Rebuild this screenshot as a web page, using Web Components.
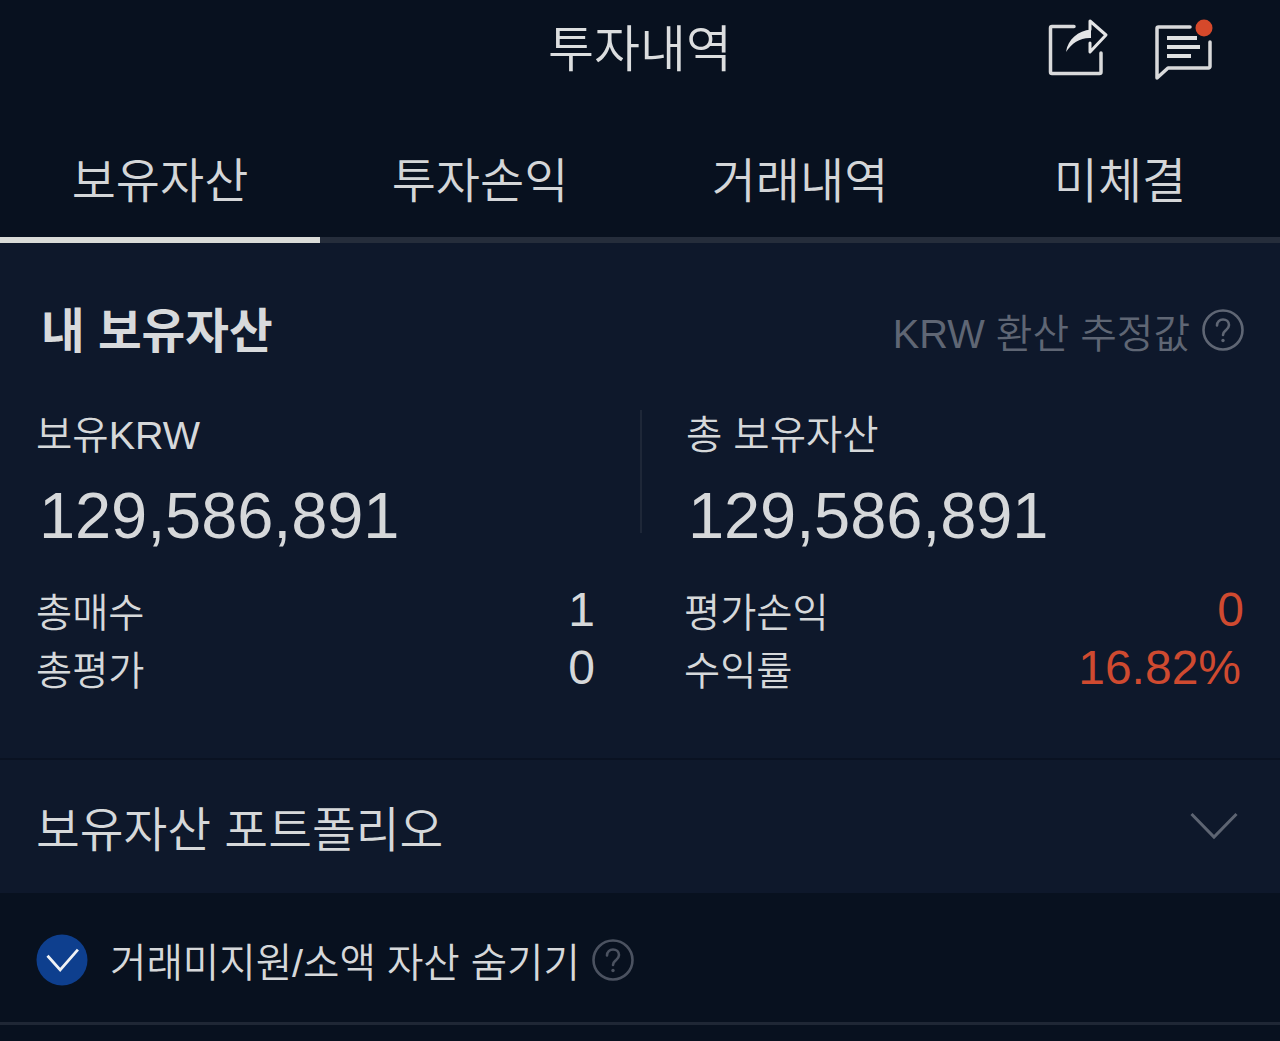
<!DOCTYPE html>
<html lang="ko">
<head>
<meta charset="utf-8">
<title>투자내역</title>
<style>
html, body { margin: 0; padding: 0; background: #08111f; }
body {
  width: 1280px;
  height: 1041px;
  overflow: hidden;
  font-family: "Liberation Sans", "Noto Sans CJK KR", sans-serif;
  font-weight: 350;
  color: #d6d8da;
}
</style>
</head>
<body>
<invest-page></invest-page>

<script>
// help icon, shared by the card head and the bottom option row
const helpIcon = (size, color) => `
<svg width="${size}" height="${size}" viewBox="0 0 42 42" fill="none" stroke="${color}">
  <circle cx="21" cy="21" r="19.500" stroke-width="2.600"/>
  <path d="M15 16.500c0-3.700 2.700-6 6-6s6 2.200 6 5.600c0 2.800-1.800 4-3.500 5.400-1.500 1.200-2.500 2.400-2.500 4.500" stroke-width="2.600" stroke-linecap="round"/>
  <circle cx="21" cy="31.500" r="1.700" fill="${color}" stroke="none"/>
</svg>`;

class TopBar extends HTMLElement {
  constructor() {
    super();
    this.attachShadow({ mode: 'open' });
    this.shadowRoot.innerHTML = `
<style>
:host { display: grid; grid-template-columns: 1fr auto 1fr; align-items: start; height: 118px; }
h1 { grid-column: 2; margin: 0; font-size: 50px; font-weight: 350; line-height: 100px; color: #dcdedf; }
.icons { grid-column: 3; display: flex; justify-content: flex-end; gap: 43px; padding: 18px 66px 0 0; }
svg { display: block; }
</style>
<h1>투자내역</h1>
<div class="icons">
  <svg width="62" height="62" viewBox="0 0 62 62" fill="none">
    <path d="M27 8.500H5a1.500 1.500 0 0 0-1.500 1.500V54a1.500 1.500 0 0 0 1.500 1.500H52.500a1.500 1.500 0 0 0 1.500-1.500V35" stroke="#d9dadb" stroke-width="3.500" stroke-linecap="round" stroke-linejoin="round"/>
    <path d="M43 11.500V3L59 17 43 34V25" stroke="#e4e5e6" stroke-width="3" stroke-linejoin="round" stroke-linecap="round"/>
    <path d="M19 34C21 21 31 13 44 11.500V20C33 19.500 25 25 19 34Z" fill="#e4e5e6"/>
  </svg>
  <svg width="62" height="62" viewBox="0 0 62 62" fill="none">
    <path d="M38 9H6.500a1.500 1.500 0 0 0-1.500 1.500V60L16 50H56.500a1.500 1.500 0 0 0 1.500-1.500V24" stroke="#d9dadb" stroke-width="3.500" stroke-linecap="round" stroke-linejoin="round"/>
    <path d="M15 20H45M15 29H48M15 38H39" stroke="#e0e1e2" stroke-width="4.200"/>
    <circle cx="52" cy="10" r="8.500" fill="#d6492b"/>
  </svg>
</div>`;
  }
}

class TabBar extends HTMLElement {
  constructor() {
    super();
    this.attachShadow({ mode: 'open' });
    this.shadowRoot.innerHTML = `
<style>
:host { display: grid; grid-template-columns: repeat(4, 1fr); }
::slotted(*) { display: block; }
</style>
<slot></slot>`;
  }
}

class TabItem extends HTMLElement {
  constructor() {
    super();
    this.attachShadow({ mode: 'open' });
    this.shadowRoot.innerHTML = `
<style>
:host { display: block; height: 125px; box-sizing: border-box; padding-top: 6px; text-align: center; font-size: 48px; line-height: 116px; color: #d4d6d8; border-bottom: 6px solid #252d3b; }
:host([active]) { border-bottom-color: #d9dbd8; }
</style>
<slot></slot>`;
  }
}

class AssetCard extends HTMLElement {
  constructor() {
    super();
    this.attachShadow({ mode: 'open' });
    this.shadowRoot.innerHTML = `
<style>
:host { display: block; background: #0e182b; height: 515px; box-sizing: border-box; padding: 50px 36px 0 36px; }
.head { display: flex; justify-content: space-between; align-items: center; height: 74px; }
h2 { margin: -6px 0 0 5px; font-size: 47.500px; font-weight: 700; color: #d8dadc; }
.note { display: flex; align-items: center; gap: 12px; font-size: 39.800px; color: #5f6674; }
.note svg { display: block; }
.cols { display: grid; grid-template-columns: 606px 1fr; margin-top: 43px; }
</style>
<div class="head">
  <h2>내 보유자산</h2>
  <div class="note"><span>KRW 환산 추정값</span>${helpIcon(42, '#5f6674')}</div>
</div>
<div class="cols"><slot></slot></div>`;
  }
}

class AssetColumn extends HTMLElement {
  constructor() {
    super();
    this.attachShadow({ mode: 'open' });
    this.shadowRoot.innerHTML = `
<style>
:host { display: block; }
.top { height: 123px; margin-bottom: 47px; box-sizing: border-box; }
:host([divided]) .top { border-right: 2px solid #1e2738; }
.label { font-size: 39.500px; line-height: 50px; height: 50px; padding-left: var(--label-pad, 0); color: #d6d8da; }
.total { font-size: 65px; line-height: 72px; margin-top: 20px; padding-left: var(--total-pad, 3px); color: #d6d8da; letter-spacing: -0.1px; }
</style>
<div class="top">
  <div class="label"><slot name="label"></slot></div>
  <div class="total"><slot name="total"></slot></div>
</div>
<slot></slot>`;
  }
}

class StatRow extends HTMLElement {
  constructor() {
    super();
    this.attachShadow({ mode: 'open' });
    this.shadowRoot.innerHTML = `
<style>
:host { display: flex; justify-content: space-between; align-items: center; height: 58px; font-size: 39.300px; color: #d6d8da; }
.v { font-size: 48px; }
:host([red]) .v { color: #cf4a30; }
</style>
<span><slot name="name"></slot></span>
<span class="v"><slot></slot></span>`;
  }
}

class PortfolioRow extends HTMLElement {
  constructor() {
    super();
    this.attachShadow({ mode: 'open' });
    this.shadowRoot.innerHTML = `
<style>
:host { display: flex; justify-content: space-between; align-items: center; box-sizing: border-box; height: 135px; padding: 0 42px 0 36px; background: #0e182b; border-top: 2px solid #0a1222; font-size: 47.600px; color: #d6d8da; }
svg { display: block; }
</style>
<span><slot></slot></span>
<svg width="48" height="30" viewBox="0 0 48 30" fill="none"><path d="M1.500 2L24 25 46.500 2" stroke="#5d6472" stroke-width="3"/></svg>`;
  }
}

class OptionRow extends HTMLElement {
  constructor() {
    super();
    this.attachShadow({ mode: 'open' });
    this.shadowRoot.innerHTML = `
<style>
:host { display: flex; align-items: center; box-sizing: border-box; height: 132px; padding: 4px 0 0 36px; border-bottom: 3px solid #1f2735; font-size: 39.600px; color: #d6d8da; }
.check { display: block; margin-right: 22px; }
.help { display: flex; margin-left: 12px; }
</style>
<svg class="check" width="52" height="52" viewBox="0 0 52 52"><circle cx="26" cy="26" r="25.500" fill="#0e3f8e"/><path d="M11.500 21.700L24.200 36 41.900 15.700" fill="none" stroke="#f0f2f5" stroke-width="2.800"/></svg>
<span><slot></slot></span>
<span class="help">${helpIcon(42, '#4b5260')}</span>`;
  }
}

class InvestPage extends HTMLElement {
  constructor() {
    super();
    this.attachShadow({ mode: 'open' });
    this.shadowRoot.innerHTML = `
<style>
:host { display: block; }
</style>
<top-bar></top-bar>
<tab-bar>
  <tab-item active>보유자산</tab-item>
  <tab-item>투자손익</tab-item>
  <tab-item>거래내역</tab-item>
  <tab-item>미체결</tab-item>
</tab-bar>
<asset-card>
  <asset-column divided>
    <span slot="label">보유KRW</span>
    <span slot="total">129,586,891</span>
    <stat-row style="padding-right:47px"><span slot="name">총매수</span>1</stat-row>
    <stat-row style="padding-right:47px"><span slot="name">총평가</span>0</stat-row>
  </asset-column>
  <asset-column style="padding-left:42px;--label-pad:2px;--total-pad:4px">
    <span slot="label">총 보유자산</span>
    <span slot="total">129,586,891</span>
    <stat-row red><span slot="name">평가손익</span>0</stat-row>
    <stat-row red><span slot="name">수익률</span><span style="margin-right:3px">16.82%</span></stat-row>
  </asset-column>
</asset-card>
<portfolio-row>보유자산 포트폴리오</portfolio-row>
<option-row>거래미지원/소액 자산 숨기기</option-row>`;
  }
}

customElements.define('top-bar', TopBar);
customElements.define('tab-bar', TabBar);
customElements.define('tab-item', TabItem);
customElements.define('asset-card', AssetCard);
customElements.define('asset-column', AssetColumn);
customElements.define('stat-row', StatRow);
customElements.define('portfolio-row', PortfolioRow);
customElements.define('option-row', OptionRow);
customElements.define('invest-page', InvestPage);
</script>
</body>
</html>
